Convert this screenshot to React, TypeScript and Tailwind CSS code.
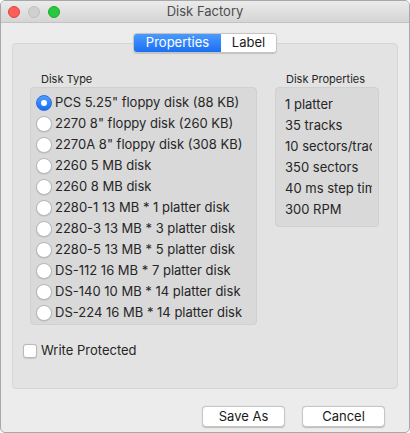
const diskTypes = [
  'PCS 5.25" floppy disk (88 KB)',
  '2270 8" floppy disk (260 KB)',
  '2270A 8" floppy disk (308 KB)',
  '2260 5 MB disk',
  '2260 8 MB disk',
  '2280-1 13 MB * 1 platter disk',
  '2280-3 13 MB * 3 platter disk',
  '2280-5 13 MB * 5 platter disk',
  'DS-112 16 MB * 7 platter disk',
  'DS-140 10 MB * 14 platter disk',
  'DS-224 16 MB * 14 platter disk',
];

const diskProps = ['1 platter', '35 tracks', '10 sectors/track', '350 sectors', '40 ms step time', '300 RPM'];

function Radio({ checked }: { checked: boolean }) {
  if (checked) {
    return (
      <span className="w-[16px] h-[16px] rounded-full bg-gradient-to-b from-[#4f9cff] to-[#1a6cf3] border border-[#2a6fe0] flex items-center justify-center shrink-0">
        <span className="w-[6px] h-[6px] rounded-full bg-white" />
      </span>
    );
  }
  return <span className="w-[16px] h-[16px] rounded-full bg-white border border-[#b8b8b8] shadow-[0_0.5px_1px_rgba(0,0,0,0.15)] shrink-0" />;
}

export default function App() {
  return (
    <div className="w-[410px] h-[433px] flex flex-col bg-[#ececec] border border-[#a8a8a8] rounded-[5px] overflow-hidden text-[#262626] font-['Inter','Liberation_Sans',sans-serif]">
      {/* title bar */}
      <div className="h-[22px] shrink-0 relative flex items-center bg-gradient-to-b from-[#ebebeb] to-[#d5d5d5] border-b border-[#c2c2c2]">
        <div className="flex items-center gap-[8px] pl-[7px]">
          <span className="w-[12px] h-[12px] rounded-full bg-[#fc5f57] border border-[#e0443e]" />
          <span className="w-[12px] h-[12px] rounded-full bg-[#d0d0d0] border border-[#c0c0c0]" />
          <span className="w-[12px] h-[12px] rounded-full bg-[#29c840] border border-[#1aab29]" />
        </div>
        <div className="absolute inset-0 flex items-center justify-center text-[13px] text-[#4d4d4d]">Disk Factory</div>
      </div>

      <div className="flex-1 flex flex-col pt-[20px] px-[11px]">
        {/* tab box */}
        <div className="relative h-[346px] bg-[#e3e3e3] border border-[#d6d6d6] rounded-[4px] flex flex-col">
          <div className="absolute -top-[11px] left-0 right-0 flex justify-center">
            <div className="flex h-[20px] rounded-[4px] overflow-hidden border border-[#c4c4c4] shadow-[0_0.5px_1px_rgba(0,0,0,0.15)] text-[13px]">
              <span className="w-[87px] flex items-center justify-center text-white bg-gradient-to-b from-[#4a9afc] to-[#1b6ff3]">Properties</span>
              <span className="w-[55px] flex items-center justify-center bg-white text-[#1a1a1a]">Label</span>
            </div>
          </div>

          <div className="flex pt-[28px] pl-[17px] pr-[18px]">
            <div className="flex flex-col">
              <div className="text-[11px] pl-[11px] h-[15px] leading-[15px]">Disk Type</div>
              <div className="w-[227px] h-[238px] bg-[#d9d9d9] border border-[#d0d0d0] rounded-[4px] pt-[4px] pl-[5px]">
                {diskTypes.map((d, i) => (
                  <div key={d} className="h-[21px] flex items-center gap-[3px] text-[13px]">
                    <Radio checked={i === 0} />
                    <span className="whitespace-nowrap">{d}</span>
                  </div>
                ))}
              </div>
            </div>
            <div className="flex flex-col ml-auto">
              <div className="text-[11px] pl-[11px] h-[15px] leading-[15px]">Disk Properties</div>
              <div className="w-[104px] h-[140px] bg-[#d9d9d9] border border-[#d0d0d0] rounded-[4px] pt-[6px] pl-[9px] pr-[6px]">
                <div className="overflow-hidden">
                  {diskProps.map((p) => (
                    <div key={p} className="h-[21px] flex items-center text-[13px] whitespace-nowrap">{p}</div>
                  ))}
                </div>
              </div>
            </div>
          </div>

          <div className="flex items-center gap-[4px] pl-[10px] mt-[16px] text-[13px]">
            <span className="w-[14px] h-[14px] rounded-[3px] bg-white border border-[#b8b8b8] shadow-[0_0.5px_1px_rgba(0,0,0,0.12)]" />
            <span>Write Protected</span>
          </div>
        </div>

        <div className="flex justify-end gap-[17px] mt-[17px] pr-[13px] text-[13px]">
          <button className="w-[83px] h-[21px] bg-white rounded-[4px] border border-[#c6c6c6] shadow-[0_0.5px_1px_rgba(0,0,0,0.2)] text-[#1a1a1a]">Save As</button>
          <button className="w-[83px] h-[21px] bg-white rounded-[4px] border border-[#c6c6c6] shadow-[0_0.5px_1px_rgba(0,0,0,0.2)] text-[#1a1a1a]">Cancel</button>
        </div>
      </div>
    </div>
  );
}
